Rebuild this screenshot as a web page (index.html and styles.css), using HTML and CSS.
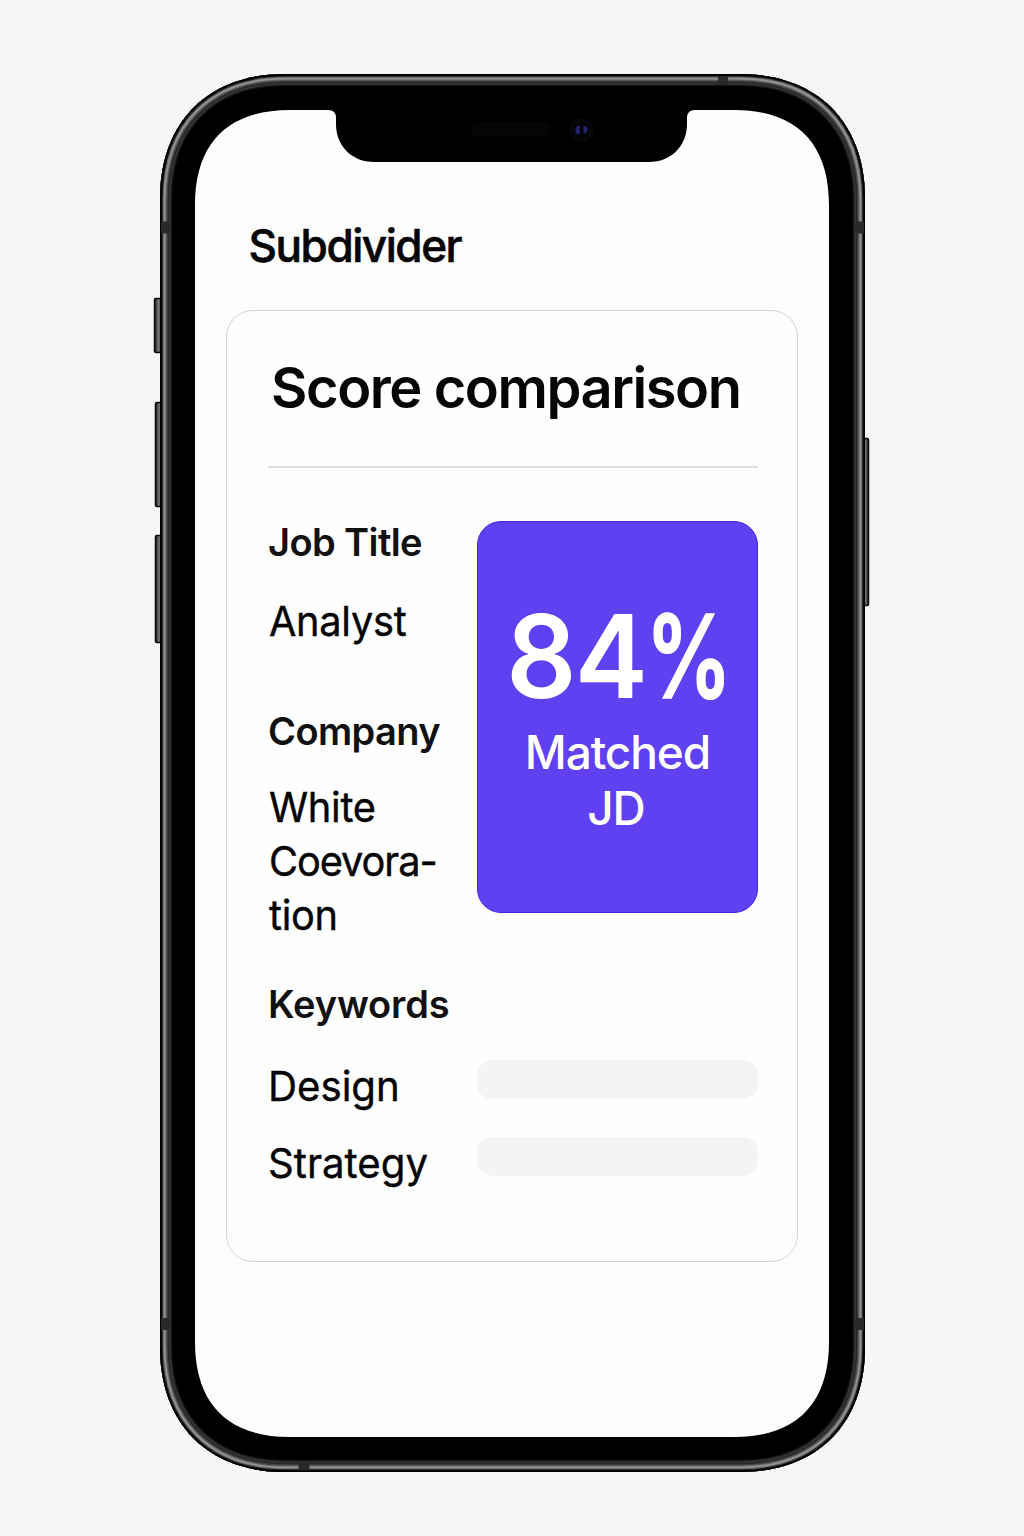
FILE: index.html
```html
<!DOCTYPE html>
<html lang="en">
<head>
<meta charset="utf-8">
<title>Subdivider</title>
<link rel="stylesheet" href="styles.css">
</head>
<body>
<main class="stage">
  <svg class="device" viewBox="0 0 1024 1536" aria-hidden="true">
    <defs>
      <linearGradient id="side" x1="0" x2="1">
        <stop offset="0" stop-color="#161616"/><stop offset=".5" stop-color="#777"/><stop offset="1" stop-color="#222"/>
      </linearGradient>
      <path id="body" d="M285 74H740C817 74 865 122 865 199V1347C865 1424 817 1472 740 1472H285C208 1472 160 1424 160 1347V199C160 122 208 74 285 74Z"/>
      <clipPath id="bodyClip"><use href="#body"/></clipPath>
    </defs>
    <g fill="url(#side)" stroke="#080808" stroke-width="1.5">
      <rect x="154.500" y="298.500" width="8" height="54" rx="1.500"/>
      <rect x="155.500" y="402.500" width="7" height="104" rx="1.500"/>
      <rect x="155.500" y="535.500" width="7" height="107" rx="1.500"/>
      <rect x="862" y="438.500" width="6.500" height="167" rx="1.500"/>
    </g>
    <g clip-path="url(#bodyClip)" fill="none">
      <use href="#body" fill="#000"/>
      <use href="#body" stroke="#151515" stroke-width="24.500"/>
      <use href="#body" stroke="#353535" stroke-width="21.500"/>
      <use href="#body" stroke="#262626" stroke-width="18"/>
      <use href="#body" stroke="#444" stroke-width="15.500"/>
      <use href="#body" stroke="#666" stroke-width="13"/>
      <use href="#body" stroke="#929292" stroke-width="11"/>
      <use href="#body" stroke="#666" stroke-width="7.500"/>
      <use href="#body" stroke="#202020" stroke-width="5.500"/>
      <use href="#body" stroke="#000" stroke-width="3.500"/>
    </g>
    <g fill="#292929">
      <rect x="161" y="221.500" width="9" height="12"/><rect x="855" y="221.500" width="9" height="12"/>
      <rect x="161" y="1318" width="9" height="12"/><rect x="855" y="1318" width="9" height="12"/>
      <rect x="718" y="76" width="10" height="9"/><rect x="298.500" y="1461" width="11" height="9"/>
    </g>
    <path fill="#fdfdfd" d="M290 110H328Q336 110 336 118V124C336 146 352 162 374 162H649C671 162 687 146 687 124V118Q687 110 695 110H734C796 110 829 143 829 205V1342C829 1404 796 1437 734 1437H290C228 1437 195 1404 195 1342V205C195 143 228 110 290 110Z"/>
    <rect x="471" y="122" width="80" height="14" rx="7" fill="#050505"/>
    <circle cx="581.500" cy="130" r="12" fill="#070709"/>
    <circle cx="581.500" cy="130" r="7.500" fill="#020204"/>
    <path d="M580 125C574 126 574 134 579 134.500Q581 132 579.500 130ZM583.500 125.500V133.500C589 134 589 125 583.500 125.500Z" fill="#22246b"/>
  </svg>
  <section class="screen">
    <header class="brand">Subdivider</header>
    <article class="card">
      <h1 class="title">Score comparison</h1>
      <div class="columns">
        <dl class="details">
          <dt class="label job">Job Title</dt>
          <dd class="value analyst">Analyst</dd>
          <dt class="label company">Company</dt>
          <dd class="value employer">White<br><span class="tight">Coevora-</span><br>tion</dd>
          <dt class="label keywords">Keywords</dt>
        </dl>
        <div class="score">
          <strong class="percent">84<span class="sign">%</span></strong>
          <span class="match">Matched</span>
          <span class="match jd">JD</span>
        </div>
      </div>
      <div class="keyword"><span class="value design">Design</span><span class="bar"></span></div>
      <div class="keyword"><span class="value strategy">Strategy</span><span class="bar"></span></div>
    </article>
  </section>
</main>
</body>
</html>
```
FILE: styles.css
```css
* { box-sizing: border-box; }
body { margin: 0; background: #f6f6f6; color: #050505; font-family: Inter, "Liberation Sans", sans-serif; }
.stage { position: relative; width: 1024px; height: 1536px; overflow: hidden; }
.device { position: absolute; inset: 0; width: 1024px; height: 1536px; }
.screen { position: relative; width: 572px; margin-left: 226px; padding-top: 216px; white-space: nowrap; }
.brand { height: 94px; padding-left: 23px; font-size: 45px; line-height: 60px; font-weight: 500; letter-spacing: -1.5px; transform: scaleX(.98); transform-origin: left; -webkit-text-stroke: .6px; }
.card { height: 952px; padding: 42px 39px 0 41px; border: 1px solid #d3d3d3; border-radius: 27px; background: #fefefe; }
.title { height: 115px; margin: 0; padding-left: 3px; border-bottom: 2px solid #dedede; font-size: 56px; line-height: 70px; font-weight: 600; letter-spacing: -1.45px; }
.columns { display: grid; grid-template-columns: 209px 281px; align-items: start; padding-top: 53px; height: 592px; }
.details { margin: 0; }
.label { font-size: 38px; line-height: 44px; font-weight: 600; letter-spacing: -0.6px; color: #111; }
.job { margin-top: -1px; }
.value { margin: 0; font-size: 41px; line-height: 54px; letter-spacing: -0.3px; transform: scaleX(.97); transform-origin: left; -webkit-text-stroke: .4px; }
.analyst { margin-top: 30px; padding-left: 1px; }
.company { margin-top: 61px; }
.employer { margin-top: 27px; padding-left: 1px; }
.tight { letter-spacing: -1.1px; }
.keywords { margin-top: 40px; letter-spacing: -0.15px; }
.score { display: flex; flex-direction: column; align-items: center; height: 392px; padding-top: 80px; border: 1px solid #4524e2; border-radius: 24px; background: #5f41f1; color: #fff; }
.percent { margin-left: 4px; font-size: 115px; line-height: 110px; font-weight: 600; letter-spacing: -2px; transform: scaleX(.955); }
.sign { display: inline-block; margin-right: -22px; transform: scaleX(.78); transform-origin: left; -webkit-text-stroke: 1.5px; }
.match { margin-top: 12px; font-size: 46px; line-height: 57px; font-weight: 500; letter-spacing: -1.1px; }
.jd { margin: -1px 3px 0 0; }
.keyword { display: grid; grid-template-columns: 209px 281px; height: 77px; }
.design { margin-top: -1px; letter-spacing: 0; }
.strategy { margin-top: -1px; letter-spacing: 0; }
.keyword .value { width: max-content; height: 54px; transform: scaleX(.98); }
.bar { height: 39px; border-radius: 15px; background: #f4f4f4; }
```
